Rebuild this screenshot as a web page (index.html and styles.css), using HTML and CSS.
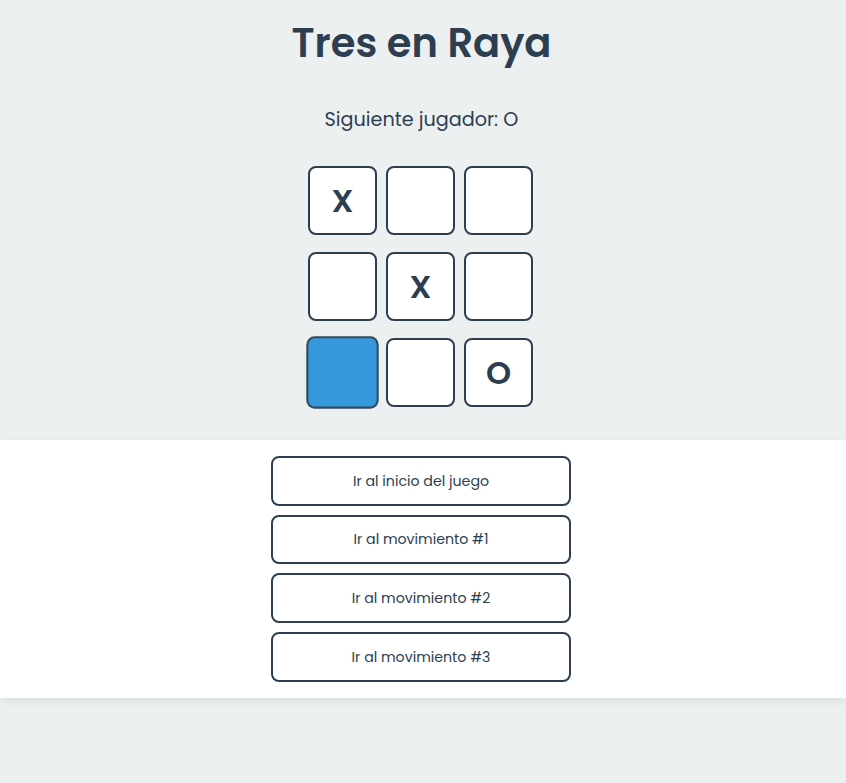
FILE: index.html
```html
<!DOCTYPE html>
<html lang="es">
<head>
<meta charset="utf-8">
<title>Tres en Raya</title>
<link rel="stylesheet" href="styles.css">
</head>
<body>
<div class="game">
  <h1 class="title">Tres en Raya</h1>
  <div class="status">Siguiente jugador: O</div>
  <div class="board">
    <div class="row">
      <button class="square">X</button>
      <button class="square"></button>
      <button class="square"></button>
    </div>
    <div class="row">
      <button class="square"></button>
      <button class="square">X</button>
      <button class="square"></button>
    </div>
    <div class="row">
      <button class="square square-hover"></button>
      <button class="square"></button>
      <button class="square">O</button>
    </div>
  </div>
</div>
<div class="history">
  <ol class="moves">
    <li><button class="move">Ir al inicio del juego</button></li>
    <li><button class="move">Ir al movimiento #1</button></li>
    <li><button class="move">Ir al movimiento #2</button></li>
    <li><button class="move">Ir al movimiento #3</button></li>
  </ol>
</div>
</body>
</html>
```

FILE: styles.css
```css
html, body {
  margin: 0;
  padding: 0;
}
body {
  background: #ecf0f1;
  color: #2c3e50;
  font-family: "Poppins", "Inter", "Open Sans", sans-serif;
  min-height: 783px;
}
.game {
  display: flex;
  flex-direction: column;
  align-items: center;
  padding-right: 3px;
}
.title {
  margin: 18px 0 0;
  font-size: 40px;
  line-height: 50px;
  font-weight: 600;
}
.status {
  margin-top: 38px;
  font-size: 19.2px;
  line-height: 28px;
}
.board {
  margin-top: 32px;
  margin-right: 2px;
  display: flex;
  flex-direction: column;
  gap: 17px;
}
.row {
  display: flex;
  gap: 9px;
}
.square {
  width: 69px;
  height: 69px;
  box-sizing: border-box;
  border: 2px solid #2c3e50;
  border-radius: 8px;
  background: #ffffff;
  color: #2c3e50;
  font-family: inherit;
  font-size: 32px;
  font-weight: 600;
  padding: 0;
  display: flex;
  align-items: center;
  justify-content: center;
}
.square-hover {
  background: #3498db;
  transform: scale(1.05);
  border-color: #34495e;
}
.history {
  margin-top: 33px;
  background: #ffffff;
  padding: 16px 4px 16.4px 0;
  box-shadow: 0 3px 8px rgba(0, 0, 0, 0.07);
}
.moves {
  list-style: none;
  margin: 0;
  padding: 0;
  display: flex;
  flex-direction: column;
  align-items: center;
  gap: 9.2px;
}
.moves li {
  margin: 0;
}
.move {
  width: 300px;
  height: 49.5px;
  box-sizing: border-box;
  border: 2px solid #2c3e50;
  border-radius: 8px;
  background: #ffffff;
  color: #2c3e50;
  font-family: inherit;
  font-size: 14.2px;
  padding: 1px 0 0;
  cursor: pointer;
}
```
